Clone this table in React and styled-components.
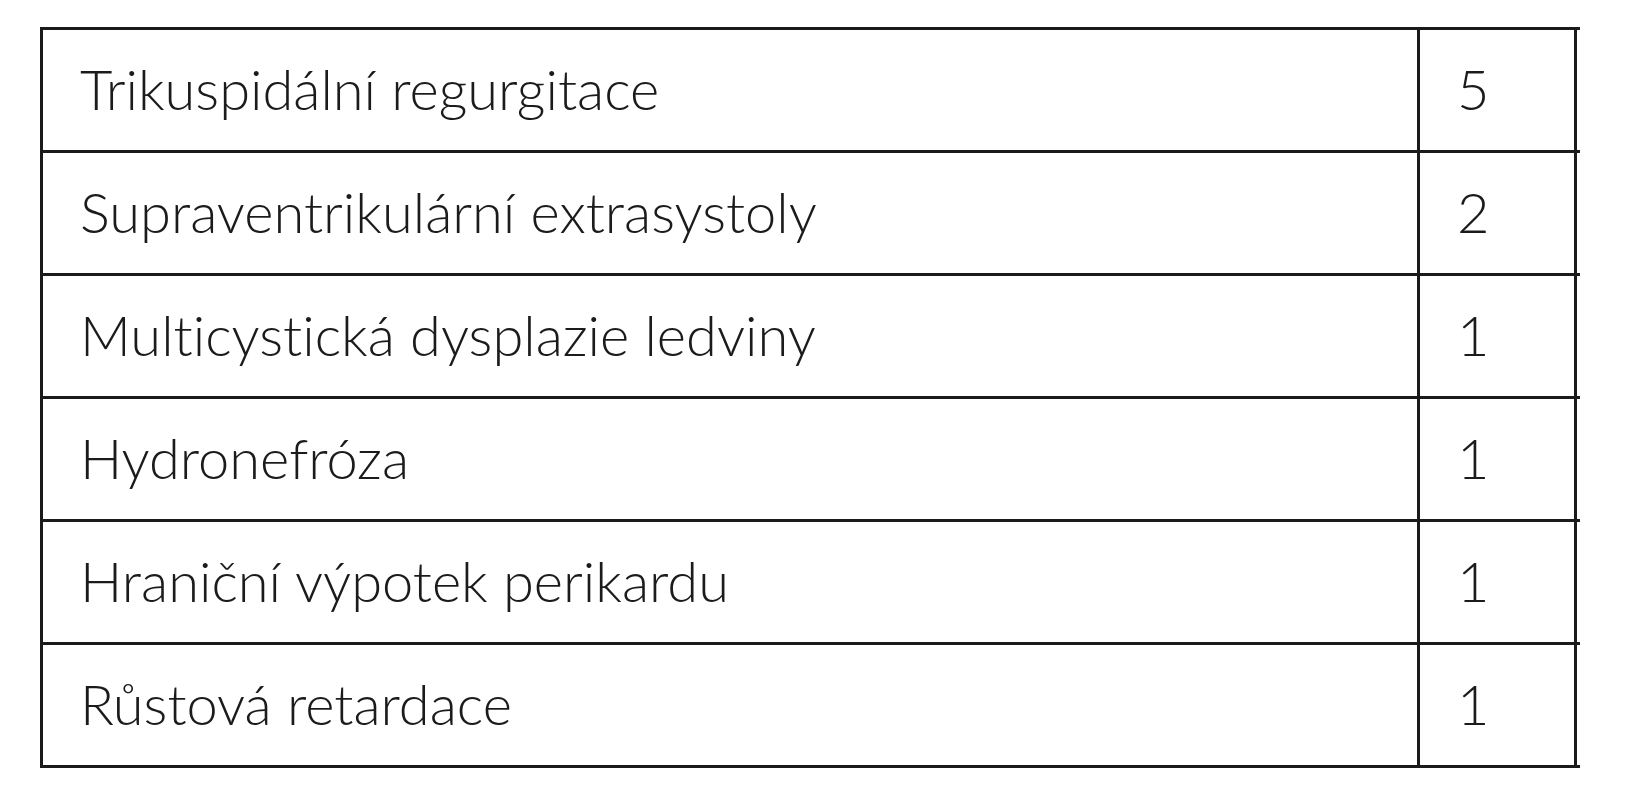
import React from 'react';
import styled, { createGlobalStyle } from 'styled-components';

const GlobalStyle = createGlobalStyle`
  html, body {
    margin: 0;
    padding: 0;
    background: #ffffff;
  }
  body {
    font-family: Lato, "Open Sans", "Liberation Sans", sans-serif;
    color: #1b1b1b;
  }
`

const Page = styled.div`
  width: 1640px;
  height: 800px;
  padding: 27px 0 0 40px;
  box-sizing: border-box;
  background: #fff;
`

const Table = styled.div`
  width: 1540px;
  border-top: 3px solid #1b1b1b;
`

const Row = styled.div`
  display: grid;
  grid-template-columns: 1377px 160px 3px;
  height: 123px;
  box-sizing: border-box;
  border-bottom: 3px solid #1b1b1b;
`

const Cell = styled.div`
  display: flex;
  align-items: center;
  padding-left: 37px;
  border-left: 3px solid #1b1b1b;
  font-size: 56px;
  font-weight: 300;
  line-height: 1;
  white-space: nowrap;
  padding-bottom: 2px;
  font-variant-ligatures: none;
  font-feature-settings: "liga" 0, "dlig" 0;
`

const Count = styled(Cell)`
  border-right: 3px solid #1b1b1b;
`

const rows = [
  ['Trikuspidální regurgitace', 5],
  ['Supraventrikulární extrasystoly', 2],
  ['Multicystická dysplazie ledviny', 1],
  ['Hydronefróza', 1],
  ['Hraniční výpotek perikardu', 1],
  ['Růstová retardace', 1],
];

export default function App() {
  return (
    <>
      <GlobalStyle />
      <Page>
        <Table>
          {rows.map(([label, n]) => (
            <Row key={label}>
              <Cell>{label}</Cell>
              <Count>{n}</Count>
              <div />
            </Row>
          ))}
        </Table>
      </Page>
    </>
  );
}
